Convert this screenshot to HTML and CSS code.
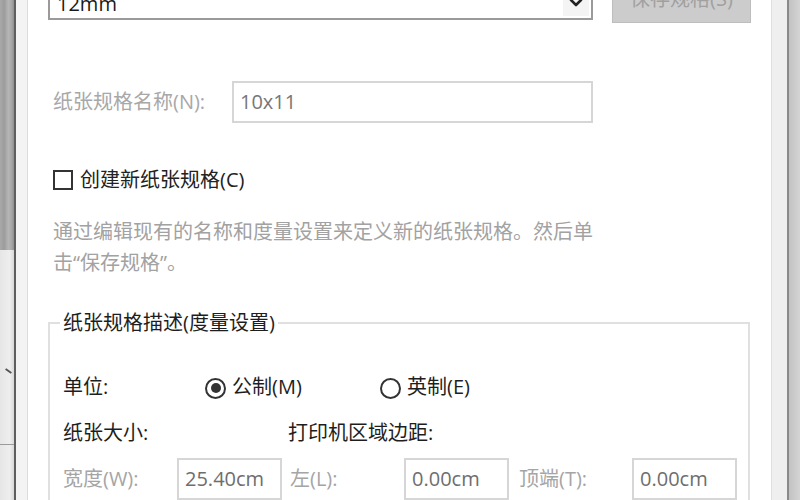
FILE: index.html
```html
<!DOCTYPE html>
<html lang="zh-CN">
<head>
<meta charset="utf-8">
<title>纸张规格</title>
<link rel="stylesheet" href="styles.css">
</head>
<body>
<div class="screen">
  <div class="bg-left">
    <div class="bg-left-top"></div>
    <div class="bg-left-bottom">
      <span class="bg-stroke"></span>
      <span class="bg-line"></span>
    </div>
  </div>
  <div class="edge-dark"></div>
  <div class="frame-left"></div>
  <main class="dialog">
    <div class="top-row">
      <div class="select">
        <span class="select-text">12mm</span>
        <span class="select-btn">
          <svg width="14" height="10" viewBox="0 0 14 10"><path d="M2 2 L7 7 L12 2" fill="none" stroke="#222" stroke-width="2.6" stroke-linecap="round" stroke-linejoin="round"/></svg>
        </span>
      </div>
      <button class="btn" type="button" disabled>保存规格(S)</button>
    </div>

    <div class="name-row">
      <span class="name-label">纸张规格名称(N):</span>
      <div class="field name-field">10x11</div>
    </div>

    <div class="check-row">
      <span class="checkbox"></span>
      <span class="check-text">创建新纸张规格(C)</span>
    </div>

    <p class="desc">通过编辑现有的名称和度量设置来定义新的纸张规格。然后单<br>击“保存规格”。</p>

    <fieldset class="group">
      <legend class="group-title">纸张规格描述(度量设置)</legend>
      <div class="unit-row">
        <span class="unit-label">单位:</span>
        <span class="radio-item radio-first"><span class="radio radio-checked"></span>公制(M)</span>
        <span class="radio-item"><span class="radio"></span>英制(E)</span>
      </div>
      <div class="heading-row">
        <span class="size-head">纸张大小:</span>
        <span class="margin-head">打印机区域边距:</span>
      </div>
      <div class="field-row">
        <span class="f-label f-label-w">宽度(W):</span>
        <div class="field small-field">25.40cm</div>
        <span class="f-label f-label-l">左(L):</span>
        <div class="field small-field">0.00cm</div>
        <span class="f-label f-label-t">顶端(T):</span>
        <div class="field small-field">0.00cm</div>
      </div>
    </fieldset>
  </main>
  <div class="frame-right"></div>
  <div class="edge-dark-right"></div>
  <div class="bg-right"></div>
</div>
</body>
</html>
```

FILE: styles.css
```css
* { box-sizing: border-box; }

html, body {
  margin: 0;
  padding: 0;
  width: 800px;
  height: 500px;
  overflow: hidden;
  background: #ffffff;
}

.screen {
  display: flex;
  width: 800px;
  height: 500px;
  overflow: hidden;
  font-family: "Open Sans", "Noto Sans CJK SC", sans-serif;
  font-size: 20px;
  line-height: 24px;
  color: #1e1e1e;
}

/* ---------- window frame / background ---------- */
.bg-left {
  width: 14px;
  display: flex;
  flex-direction: column;
}
.bg-left-top {
  height: 250px;
  background: linear-gradient(90deg, #a9a9a9 0%, #9c9c9c 30%, #b6b6b6 60%, #a4a4a4 85%, #8e8e8e 100%);
}
.bg-left-bottom {
  flex: 1;
  background: linear-gradient(90deg, #e6e6e6, #eeeeee 70%, #d8d8d8);
  display: flex;
  flex-direction: column;
  align-items: flex-end;
}
.bg-stroke {
  width: 7px;
  height: 2px;
  margin-top: 120px;
  margin-right: 2px;
  background: #555;
  transform: rotate(35deg);
}
.bg-line {
  width: 14px;
  height: 1px;
  margin-top: 72px;
  background: #9a9a9a;
}
.edge-dark {
  width: 2px;
  background: #5e5e5e;
}
.frame-left {
  width: 12px;
  background: #f3f3f3;
  border-right: 1px solid #dcdcdc;
}
.frame-right {
  width: 16px;
  background: #efefef;
  border-left: 1px solid #e0e0e0;
}
.edge-dark-right {
  width: 2px;
  background: #8a8a8a;
}
.bg-right {
  width: 11px;
  background: linear-gradient(90deg, #c2c2c2, #d4d4d4);
}

/* ---------- dialog ---------- */
.dialog {
  width: 743px;
  background: #ffffff;
  padding-left: 20px;
  display: flex;
  flex-direction: column;
}

.top-row {
  display: flex;
  align-items: flex-start;
  margin-top: -26px;
  height: 49px;
  flex-shrink: 0;
}
.select {
  width: 545px;
  height: 42px;
  margin-top: 4px;
  border: 2px solid #9a9a9a;
  display: flex;
  align-items: flex-end;
  justify-content: space-between;
  padding: 0 0 2px 7px;
}
.select-text {
  color: #1a1a1a;
  line-height: 24px;
}
.select-btn {
  width: 26px;
  height: 36px;
  margin-right: 2px;
  background: #f4f4f4;
  display: flex;
  align-items: flex-end;
  justify-content: center;
  padding-bottom: 8px;
}
.btn {
  width: 139px;
  height: 49px;
  margin-left: 19px;
  background: #cccccc;
  border: 1px solid #bdbdbd;
  color: #a0a0a0;
  font: inherit;
  padding: 0;
}

.name-row {
  display: flex;
  align-items: center;
  margin-top: 58px;
  height: 42px;
  flex-shrink: 0;
}
.name-label {
  width: 184px;
  padding-left: 5px;
  color: #a8a8a8;
}
.field {
  height: 42px;
  border: 2px solid #d6d6d6;
  display: flex;
  align-items: center;
  padding-left: 6px;
  color: #777777;
}
.name-field {
  width: 361px;
}

.check-row {
  display: flex;
  align-items: center;
  gap: 7px;
  margin-top: 45px;
  padding-left: 5px;
  height: 24px;
  flex-shrink: 0;
}
.checkbox {
  width: 20px;
  height: 20px;
  border: 2px solid #333333;
  background: #ffffff;
}
.check-text {
  color: #222222;
}

.desc {
  margin: 24px 0 0 0;
  padding-left: 5px;
  line-height: 31px;
  color: #a2a2a2;
  flex-shrink: 0;
}

.group {
  margin: 33px 0 0 0;
  width: 702px;
  border: 2px solid #e0e0e0;
  padding: 40px 0 0 13px;
  flex-shrink: 0;
}
.group-title {
  padding: 0 3px;
  margin-left: -3px;
  color: #1e1e1e;
  line-height: 24px;
}

.unit-row {
  display: flex;
  align-items: center;
  height: 24px;
}
.unit-label {
  width: 142px;
}
.radio-item {
  display: flex;
  align-items: center;
  gap: 6px;
}
.radio-first {
  width: 175px;
}
.radio {
  width: 21px;
  height: 21px;
  border: 2px solid #333333;
  border-radius: 50%;
  display: flex;
  align-items: center;
  justify-content: center;
  margin-top: 2px;
}
.radio-checked::after {
  content: "";
  width: 10px;
  height: 10px;
  border-radius: 50%;
  background: #333333;
}

.heading-row {
  display: flex;
  margin-top: 22px;
  height: 24px;
}
.size-head {
  width: 225px;
}

.field-row {
  display: flex;
  align-items: center;
  margin-top: 13px;
}
.f-label {
  color: #a5a5a5;
}
.f-label-w { width: 114px; }
.f-label-l { width: 114px; margin-left: 8px; }
.f-label-t { width: 113px; margin-left: 10px; }
.small-field {
  width: 105px;
  color: #6e6e6e;
}
```
